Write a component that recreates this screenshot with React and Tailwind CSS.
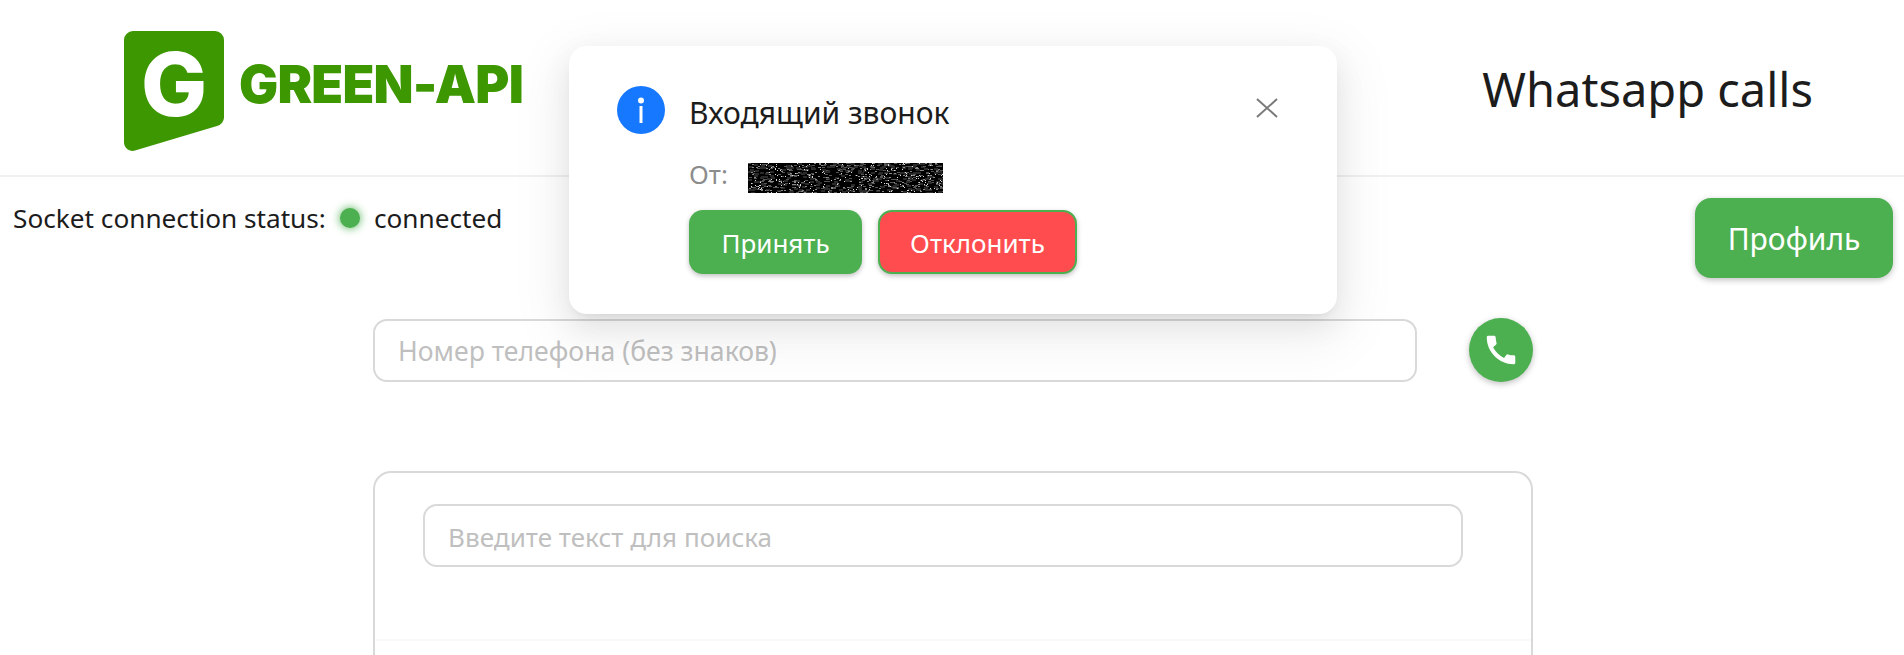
import React from "react";
import { MdCall } from "react-icons/md";

const font = "font-['Noto_Sans','Open_Sans',sans-serif]";

// Speckled block that hides the caller's number
const Redacted = () => {
  const dots = [];
  let seed = 7;
  for (let i = 0; i < 900; i++) {
    seed = (seed * 16807) % 2147483647;
    const x = seed % 195;
    seed = (seed * 16807) % 2147483647;
    const y = seed % 30;
    seed = (seed * 16807) % 2147483647;
    const v = seed % 4;
    dots.push(
      <rect key={i} x={x} y={y} width={v + 1} height={v === 3 ? 2 : 1} fill={v === 0 ? "#ddd" : v === 1 ? "#888" : v === 2 ? "#555" : "#2a2a2a"} />
    );
  }
  return (
    <svg width="195" height="30" viewBox="0 0 195 30" className="block bg-black">
      {dots}
    </svg>
  );
};

const Logo = () => (
  <div className="flex items-start">
    <svg width="100" height="120" viewBox="0 0 100 120" className="block">
      <path
        d="M9 0H91a9 9 0 0 1 9 9V86a9 9 0 0 1-7 9L11 119.500a8.500 8.500 0 0 1-11-8V9a9 9 0 0 1 9-9Z"
        fill="#3d9700"
      />
      <text x="50" y="85" textAnchor="middle" fontSize="88" fontWeight="800" fill="#fff" fontFamily="Inter, sans-serif">
        G
      </text>
    </svg>
    <span className="ml-[15px] mt-[23px] font-['Inter',sans-serif] text-[52px] leading-[62px] font-black tracking-[-0.8px] text-[#3d9700]">
      GREEN-API
    </span>
  </div>
);

const Field = ({ placeholder, className }) => (
  <input
    placeholder={placeholder}
    className={`h-[63px] rounded-[14px] border-2 border-[#d9d9d9] bg-white px-[23px] pt-[2px] outline-none placeholder:text-[#bfbfbf] ${className}`}
  />
);

export default function App() {
  return (
    <div className={`relative h-[655px] w-full overflow-hidden bg-white text-[#1c1c1c] ${font}`}>
      {/* Header */}
      <header className="flex h-[177px] items-start justify-between border-b-2 border-[#f0f0f0] pl-[124px] pr-[91px] pt-[31px]">
        <Logo />
        <h1 className="mt-[26px] text-[47px] leading-[64px] font-normal">Whatsapp calls</h1>
      </header>

      {/* Status row */}
      <div className="flex items-start justify-between pl-[13px] pr-[11px] pt-[21px]">
        <div className="flex items-center text-[26.2px] leading-[40px]">
          <span>Socket connection status:</span>
          <span className="ml-[14px] mr-[14px] size-[20px] rounded-full bg-[#4caf50] shadow-[0_0_10px_#4caf50]" />
          <span>connected</span>
        </div>
        <button className="h-[80px] w-[198px] rounded-[16px] bg-[#4caf50] text-[30px] text-white shadow-[0_2px_6px_rgba(0,0,0,0.25)]">
          Профиль
        </button>
      </div>

      {/* Main column */}
      <main className="ml-[373px] mt-[40px] w-[1160px]">
        <div className="flex items-center gap-[52px]">
          <Field placeholder="Номер телефона (без знаков)" className="flex-1 text-[26.6px]" />
          <button className="flex size-[64px] items-center justify-center rounded-full bg-[#4caf50] text-white shadow-[0_2px_6px_rgba(0,0,0,0.25)]">
            <MdCall size={38} />
          </button>
        </div>

        <section className="mt-[89px] h-[300px] rounded-t-[18px] border-2 border-[#d9d9d9]">
          <div className="h-[168px] border-b-2 border-[#f9f9f9] px-[48px] pt-[31px]">
            <Field placeholder="Введите текст для поиска" className="w-[1040px] text-[26.1px]" />
          </div>
        </section>
      </main>

      {/* Incoming call modal */}
      <div className="absolute left-[569px] top-[46px] h-[268px] w-[768px] rounded-[18px] bg-white px-[48px] pt-[40px] shadow-[0_11px_30px_rgba(0,0,0,0.08),0_6px_11px_-7px_rgba(0,0,0,0.12),0_17px_52px_15px_rgba(0,0,0,0.05)]">
        <div className="flex items-start">
          <svg width="48" height="48" viewBox="0 0 48 48" className="block shrink-0">
            <circle cx="24" cy="24" r="24" fill="#1677ff" />
            <circle cx="24" cy="14.500" r="3" fill="#fff" />
            <rect x="22.500" y="20" width="3" height="17" fill="#fff" />
          </svg>
          <div className="ml-[24px] flex-1 pt-[6px] text-[30px] leading-[42px]">Входящий звонок</div>
          <svg width="22" height="20" viewBox="0 0 22 20" className="mr-[11px] mt-[12px] block shrink-0">
            <path d="M1 1L21 19M21 1L1 19" stroke="#7a7a7a" strokeWidth="2" fill="none" />
          </svg>
        </div>
        <div className="ml-[72px]">
          <div className="mt-[29px] flex items-center text-[26px] leading-[30px] text-[#8c8c8c]">
            <span className="w-[59px] -translate-y-[4px]">От:</span>
            <Redacted />
          </div>
          <div className="mt-[17px] flex gap-[16px]">
            <button className="h-[64px] w-[173px] rounded-[14px] bg-[#4caf50] pt-[2px] text-[26px] text-white shadow-[0_2px_5px_rgba(0,0,0,0.25)]">
              Принять
            </button>
            <button className="h-[64px] w-[199px] rounded-[14px] border-2 border-[#4caf50] bg-[#ff4d4f] pt-[2px] text-[26px] text-white shadow-[0_2px_5px_rgba(0,0,0,0.25)]">
              Отклонить
            </button>
          </div>
        </div>
      </div>
    </div>
  );
}
